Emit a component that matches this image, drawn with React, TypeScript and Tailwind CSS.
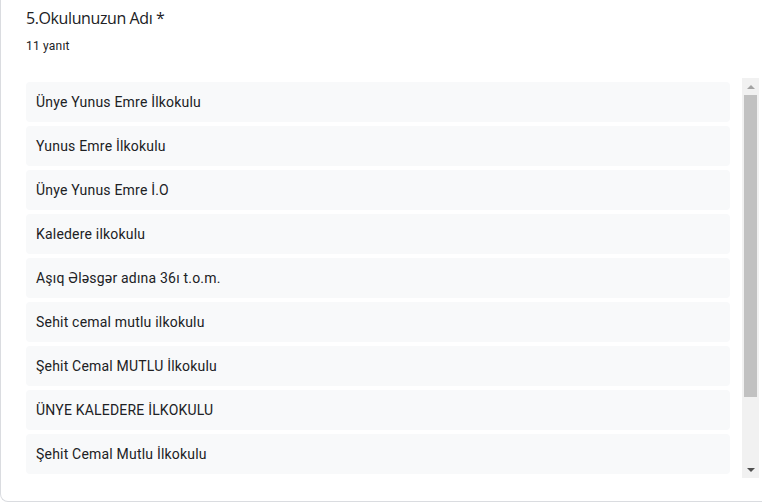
const answers = [
  'Ünye Yunus Emre İlkokulu',
  'Yunus Emre İlkokulu',
  'Ünye Yunus Emre İ.O',
  'Kaledere ilkokulu',
  'Aşıq Ələsgər adına 36ı t.o.m.',
  'Sehit cemal mutlu ilkokulu',
  'Şehit Cemal MUTLU İlkokulu',
  'ÜNYE KALEDERE İLKOKULU',
  'Şehit Cemal Mutlu İlkokulu',
];

export default function App() {
  return (
    <div className="w-[762px] h-[503px] bg-white overflow-hidden font-['Roboto',sans-serif]">
      <div className="w-[780px] h-[502px] border-l border-b border-[#dadce0] rounded-bl-lg bg-white pl-[25px]">
        {/* Question header */}
        <div className="pt-[7px] text-[16px] leading-[22px] text-[#202124] font-['Open_Sans',sans-serif] tracking-[-0.4px]">
          5.Okulunuzun Adı *
        </div>
        <div className="mt-[9px] text-[12px] leading-[16px] text-[#202124] tracking-[0.2px]">11 yanıt</div>

        {/* Answer list with scrollbar */}
        <div className="mt-[24px] flex h-[400px] w-[733px]">
          <div className="flex-1 pt-[4px] pr-[12px] flex flex-col gap-[4px]">
            {answers.map((a) => (
              <div
                key={a}
                className="h-[40px] shrink-0 rounded bg-[#f8f9fa] px-[10px] flex items-center text-[14px] tracking-[0.2px] text-[#202124]"
              >
                {a}
              </div>
            ))}
          </div>
          <div className="w-[17px] h-[400px] bg-[#f1f1f1] flex flex-col items-center">
            <div className="h-[17px] w-full flex items-center justify-center">
              <div className="w-0 h-0 border-l-[4px] border-r-[4px] border-b-[4px] border-l-transparent border-r-transparent border-b-[#a3a3a3]" />
            </div>
            <div className="w-[13px] h-[302px] bg-[#c1c1c1]" />
            <div className="flex-1" />
            <div className="h-[17px] w-full flex items-center justify-center">
              <div className="w-0 h-0 border-l-[4px] border-r-[4px] border-t-[4px] border-l-transparent border-r-transparent border-t-[#505050]" />
            </div>
          </div>
        </div>
      </div>
    </div>
  );
}
